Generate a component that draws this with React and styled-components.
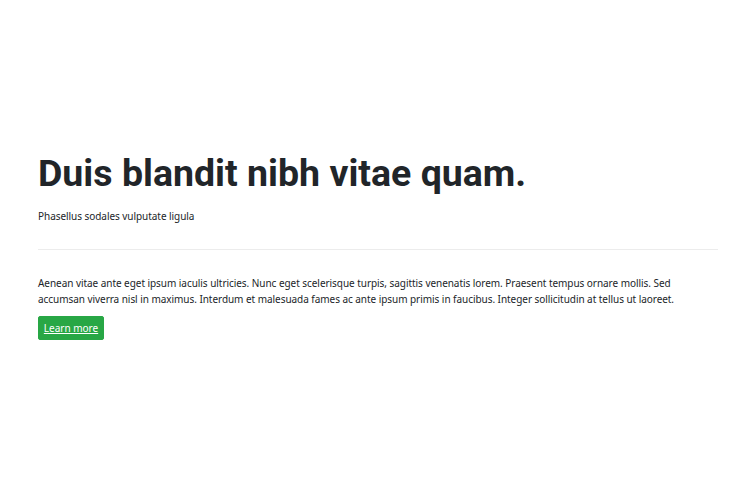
import React from "react";
import styled, { createGlobalStyle } from "styled-components";

const Global = createGlobalStyle`
  html, body { margin: 0; padding: 0; background: #fff; }
  body { font-family: "Noto Sans", "Open Sans", sans-serif; color: #212529; }
`;

const Page = styled.main`
  width: 750px;
  height: 500px;
  box-sizing: border-box;
  padding: 151px 32px 0 38px;
`;

const Jumbo = styled.section`
  display: flex;
  flex-direction: column;
`;

const Title = styled.h1`
  margin: 0;
  font-family: Roboto, "Liberation Sans", sans-serif;
  font-weight: 700;
  font-size: 37.5px;
  line-height: 44px;
  color: #212529;
`;

const Lead = styled.p`
  margin: 13px 0 0;
  font-size: 10px;
  line-height: 16px;
  letter-spacing: -0.05px;
  color: #212529;
`;

const Rule = styled.hr`
  margin: 25px 0 0;
  border: 0;
  border-top: 1px solid #ececec;
`;

const Body = styled.p`
  margin: 25px 0 0;
  font-size: 10px;
  line-height: 16px;
  letter-spacing: -0.05px;
  color: #212529;
`;

const Button = styled.a`
  align-self: flex-start;
  margin-top: 9px;
  display: inline-flex;
  align-items: center;
  justify-content: center;
  width: 66px;
  height: 24px;
  box-sizing: border-box;
  background: #28a745;
  border: 1px solid #28a745;
  border-radius: 2px;
  color: #fff;
  font-size: 10px;
  text-decoration: underline;
  cursor: pointer;
`;

export default function App() {
  return (
    <>
      <Global />
      <Page>
        <Jumbo>
          <Title>Duis blandit nibh vitae quam.</Title>
          <Lead>Phasellus sodales vulputate ligula</Lead>
          <Rule />
          <Body>
            Aenean vitae ante eget ipsum iaculis ultricies. Nunc eget scelerisque turpis, sagittis venenatis lorem. Praesent tempus ornare mollis. Sed accumsan viverra nisl in maximus. Interdum et malesuada fames ac ante ipsum primis in faucibus. Integer sollicitudin at tellus ut laoreet.
          </Body>
          <Button>Learn more</Button>
        </Jumbo>
      </Page>
    </>
  );
}
